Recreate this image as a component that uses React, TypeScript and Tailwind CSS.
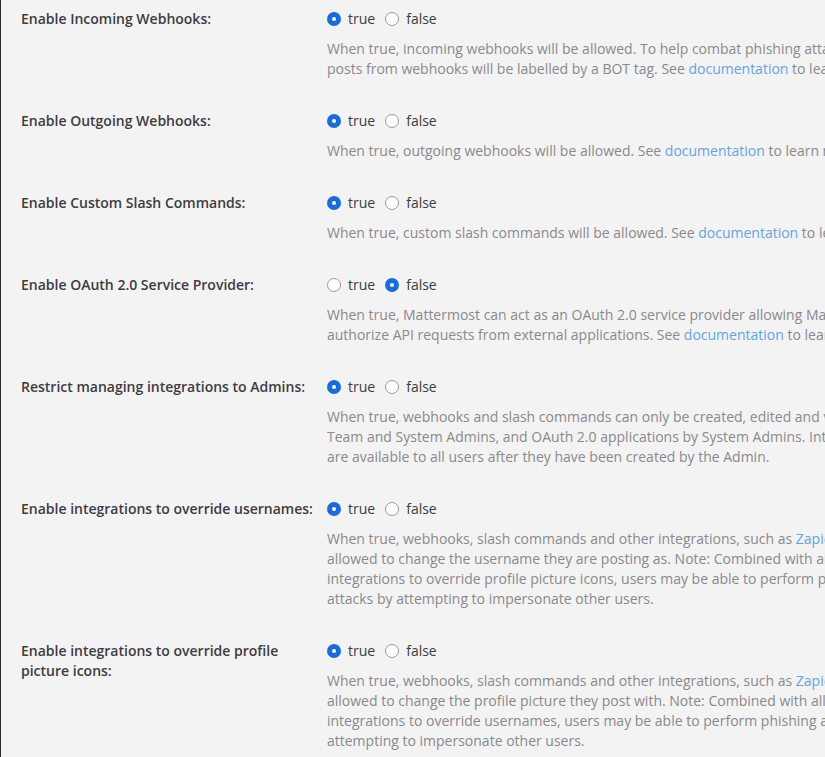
import { ReactNode } from "react";

type Setting = {
  label: ReactNode;
  value: boolean;
  help: ReactNode[];
};

const Link = ({ children }: { children: ReactNode }) => (
  <span className="text-[#64a3e8]">{children}</span>
);

const settings: Setting[] = [
  {
    label: "Enable Incoming Webhooks:",
    value: true,
    help: [
      "When true, incoming webhooks will be allowed. To help combat phishing attacks, all",
      <>posts from webhooks will be labelled by a BOT tag. See <Link>documentation</Link> to learn more.</>,
    ],
  },
  {
    label: "Enable Outgoing Webhooks:",
    value: true,
    help: [<>When true, outgoing webhooks will be allowed. See <Link>documentation</Link> to learn more.</>],
  },
  {
    label: "Enable Custom Slash Commands:",
    value: true,
    help: [<>When true, custom slash commands will be allowed. See <Link>documentation</Link> to learn more.</>],
  },
  {
    label: "Enable OAuth 2.0 Service Provider:",
    value: false,
    help: [
      "When true, Mattermost can act as an OAuth 2.0 service provider allowing Mattermost to",
      <>authorize API requests from external applications. See <Link>documentation</Link> to learn more.</>,
    ],
  },
  {
    label: "Restrict managing integrations to Admins:",
    value: true,
    help: [
      "When true, webhooks and slash commands can only be created, edited and viewed by",
      "Team and System Admins, and OAuth 2.0 applications by System Admins. Integrations",
      "are available to all users after they have been created by the Admin.",
    ],
  },
  {
    label: "Enable integrations to override usernames:",
    value: true,
    help: [
      <>When true, webhooks, slash commands and other integrations, such as <Link>Zapier</Link>, will be</>,
      "allowed to change the username they are posting as. Note: Combined with allowing",
      "integrations to override profile picture icons, users may be able to perform phishing",
      "attacks by attempting to impersonate other users.",
    ],
  },
  {
    label: (
      <>
        Enable integrations to override profile
        <br />
        picture icons:
      </>
    ),
    value: true,
    help: [
      <>When true, webhooks, slash commands and other integrations, such as <Link>Zapier</Link>, will be</>,
      "allowed to change the profile picture they post with. Note: Combined with allowing",
      "integrations to override usernames, users may be able to perform phishing attacks by",
      "attempting to impersonate other users.",
    ],
  },
];

const Radio = ({ checked, text }: { checked: boolean; text: string }) => (
  <span className="inline-flex items-center">
    {checked ? (
      <span className="w-[14px] h-[14px] rounded-full bg-[#166de0] flex items-center justify-center">
        <span className="w-[4px] h-[4px] rounded-full bg-white" />
      </span>
    ) : (
      <span className="w-[14px] h-[14px] rounded-full bg-white border border-[#9a9a9a]" />
    )}
    <span className="ml-[7px]">{text}</span>
  </span>
);

export default function App() {
  return (
    <div
      className="w-[825px] h-[757px] overflow-hidden bg-[#f3f3f3] border-l border-[#2a2a2a] text-[14px] leading-[20px] text-[#3d3c40]"
      style={{ fontFamily: '"Open Sans", "Noto Sans", sans-serif' }}
    >
      <div className="flex flex-col gap-[32px] pt-[9px] pl-[20px]">
        {settings.map((s, i) => (
          <div key={i} className="flex">
            <div className="w-[306px] shrink-0 pr-[4px] font-semibold">{s.label}</div>
            <div className="shrink-0">
              <div className="flex items-center gap-[10px] h-[20px]">
                <Radio checked={s.value} text="true" />
                <Radio checked={!s.value} text="false" />
              </div>
              <div className="mt-[10px] text-[#8a898c] whitespace-nowrap">
                {s.help.map((line, j) => (
                  <div key={j}>{line}</div>
                ))}
              </div>
            </div>
          </div>
        ))}
      </div>
    </div>
  );
}
